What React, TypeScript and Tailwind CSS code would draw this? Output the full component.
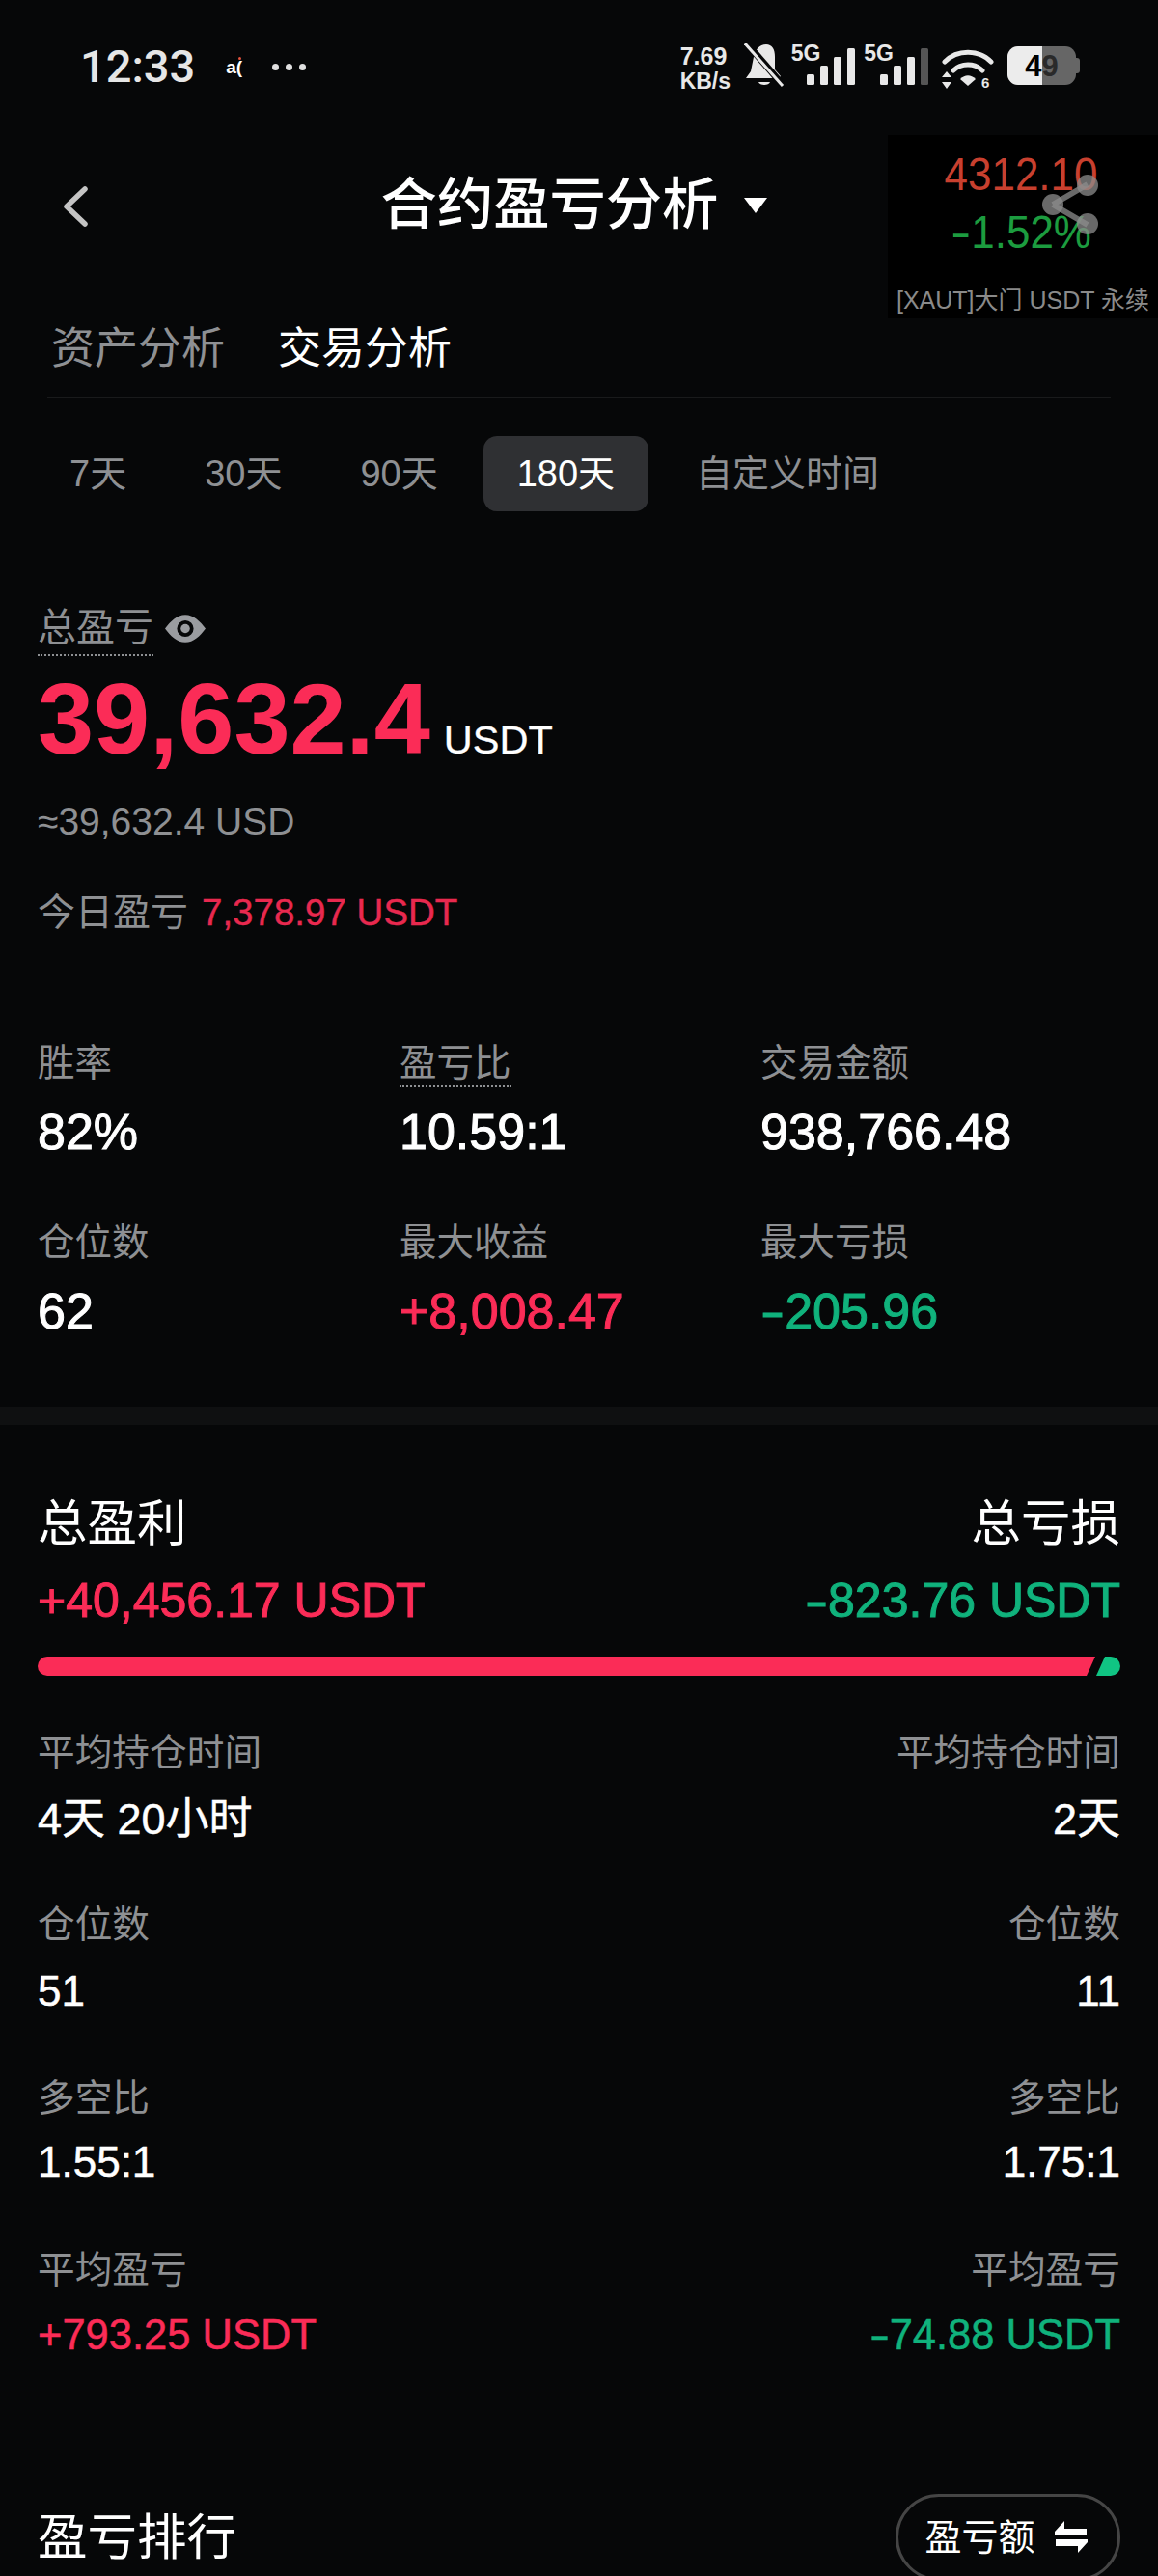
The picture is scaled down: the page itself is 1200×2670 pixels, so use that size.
import React from 'react';

const SANS = "font-['Liberation_Sans','Noto_Sans_CJK_SC',sans-serif]";

const periods = ['7天', '30天', '90天', '180天', '自定义时间'];

const stats = [
  { label: '胜率', value: '82%' },
  { label: '盈亏比', value: '10.59:1', dotted: true },
  { label: '交易金额', value: '938,766.48' },
  { label: '仓位数', value: '62' },
  { label: '最大收益', value: '+8,008.47', color: 'text-[#fb2c57]' },
  { label: '最大亏损', value: '-205.96', color: 'text-[#10b27c]' },
];

const rows = [
  { label: '平均持仓时间', left: '4天 20小时', right: '2天', h: 'h-[178px]', size: 'text-[45px] mt-[19px]' },
  { label: '仓位数', left: '51', right: '11', h: 'h-[180px]', size: 'text-[44px] mt-[19px]' },
  { label: '多空比', left: '1.55:1', right: '1.75:1', h: 'h-[178px]', size: 'text-[44px] mt-[16px]' },
];

// the reference font has a wider hyphen than Liberation Sans
const Minus = ({ children }: { children: string }) => (
  <span>
    <span className="mr-[0.15em] inline-block origin-left scale-x-[1.45]">-</span>
    {children}
  </span>
);

const Signal = ({ dimLast }: { dimLast?: boolean }) => (
  <div className="flex items-start">
    <span className="text-[23px] leading-[20px] font-bold text-[#e8e8e8]">5G</span>
    <svg width="50" height="38" viewBox="0 0 50 38" className="mt-[5px] -ml-[14px]">
      <rect x="0" y="27" width="8" height="11" rx="1.5" fill="#e8e8e8" />
      <rect x="14" y="18" width="8" height="20" rx="1.5" fill="#e8e8e8" />
      <rect x="28" y="9" width="8" height="29" rx="1.5" fill="#e8e8e8" />
      <rect x="42" y="0" width="8" height="38" rx="1.5" fill={dimLast ? '#555' : '#e8e8e8'} />
    </svg>
  </div>
);

const StatusBar = () => (
  <div className="flex h-[140px] items-start justify-between pl-[83px] pr-[81px] pt-[45px]">
    <div className="flex items-center">
      <span className="text-[47px] leading-[48px] font-medium text-[#e6e6e6] font-['Roboto',sans-serif]">12:33</span>
      <div className="relative ml-[32px] flex h-[20px] w-[20px] items-center text-[19px] leading-none font-bold text-white">
        <span>a(</span>
        <span className="absolute right-[4px] top-0 h-[3px] w-[3px] rounded-full bg-[#e5533d]" />
      </div>
      <div className="ml-[28px] flex gap-[7px]">
        <span className="h-[7px] w-[7px] rounded-full bg-[#e0e0e0]" />
        <span className="h-[7px] w-[7px] rounded-full bg-[#e0e0e0]" />
        <span className="h-[7px] w-[7px] rounded-full bg-[#e0e0e0]" />
      </div>
    </div>
    <div className="flex items-start">
      <div className="w-[54px] font-bold leading-[26px] text-[#e8e8e8]">
        <div className="text-[25px]">7.69</div>
        <div className="text-[23px]">KB/s</div>
      </div>
      <svg width="42" height="46" viewBox="0 0 42 46" className="ml-[12px]">
        <path d="M10 14 C11 7 16 1 23 1 C29 1 32 6 32 14 L32 27 L38 34 L36 36 L2 36 L7 29 Z" fill="#e8e8e8" />
        <path d="M15 40 H27 C26 44 16 44 15 40 Z" fill="#e8e8e8" />
        <path d="M2 -1 L41 44" stroke="#060708" strokeWidth="7" />
        <path d="M1 0 L40 44" stroke="#e8e8e8" strokeWidth="3" />
      </svg>
      <div className="ml-[7px]"><Signal /></div>
      <div className="ml-[9px]"><Signal dimLast /></div>
      <svg width="54" height="42" viewBox="0 0 54 42" className="ml-[14px] mt-[5px]">
        <path d="M3 14 C16 1 38 1 51 14" fill="none" stroke="#e8e8e8" strokeWidth="5" strokeLinecap="round" />
        <path d="M12 23 C20 15 34 15 42 23" fill="none" stroke="#e8e8e8" strokeWidth="5" strokeLinecap="round" />
        <path d="M19 32 C24 27 30 27 35 32 L27 39 Z" fill="#e8e8e8" />
        <path d="M5 24 L10 30 H0 Z M5 42 L0 35 H10 Z" fill="#e8e8e8" />
        <text x="41" y="41" fontSize="15" fontWeight="700" fill="#e8e8e8">6</text>
      </svg>
      <div className="ml-[14px] mt-[3px] flex items-center">
        <div className="relative flex h-[40px] w-[71px] items-center justify-center overflow-hidden rounded-[11px] bg-[#666666]">
          <div className="absolute inset-y-0 left-0 w-[36px] bg-[#ececec]" />
          <span className="relative text-[31px] font-bold leading-none text-black">4<span className="text-[#2a2a2a]">9</span></span>
        </div>
        <div className="h-[16px] w-[4px] rounded-r-[3px] bg-[#666666]" />
      </div>
    </div>
  </div>
);

const PriceWidget = () => (
  <div className="absolute right-0 top-[140px] flex h-[190px] w-[280px] flex-col items-center bg-black">
    <div className="mt-[15px] ml-[-4px] scale-y-[1.1] text-[44px] leading-[52px] text-[#c8402f]">4312.10</div>
    <div className="mt-[8px] ml-[-4px] scale-y-[1.1] text-[44px] leading-[52px] text-[#1c9c3f]">
      <Minus>1.52%</Minus>
    </div>
    <div className="mt-[29px] whitespace-nowrap text-[25px] leading-[30px] text-[#8a8a8a]">[XAUT]大门 USDT 永续</div>
    <svg width="60" height="62" viewBox="0 0 60 62" className="absolute left-[159px] top-[41px]">
      <path d="M12 31 L48 10 M12 31 L48 52" stroke="#8c8c8c" strokeOpacity="0.75" strokeWidth="6" />
      <circle cx="12" cy="31" r="11" fill="#8c8c8c" fillOpacity="0.75" />
      <circle cx="48" cy="11" r="11" fill="#8c8c8c" fillOpacity="0.75" />
      <circle cx="48" cy="51" r="11" fill="#8c8c8c" fillOpacity="0.75" />
    </svg>
  </div>
);

const Header = () => (
  <div className="relative flex h-[144px] items-center justify-center">
    <svg width="26" height="42" viewBox="0 0 26 42" className="absolute left-[65px] top-[53px]">
      <path d="M23 3 L4 21 L23 39" fill="none" stroke="#c4c4c4" strokeWidth="5.5" strokeLinecap="round" strokeLinejoin="round" />
    </svg>
    <h1 className="ml-[-9px] text-[58.3px] leading-[70px] font-medium text-white">合约盈亏分析</h1>
    <svg width="26" height="17" viewBox="0 0 26 17" className="ml-[26px]">
      <path d="M1 1 H25 L13 17 Z" fill="white" />
    </svg>
  </div>
);

const Tabs = () => (
  <div className="mx-[49px] mt-[46px] flex gap-[55px] border-b-2 border-[#191a1b] pb-[17px] pl-[4px] text-[45px] leading-[64px]">
    <span className="text-[#8e9093]">资产分析</span>
    <span className="text-white">交易分析</span>
  </div>
);

const PeriodBar = () => (
  <div className="mt-[39px] flex gap-[9px] pl-[36px] text-[38px]">
    {periods.map(p => (
      <div
        key={p}
        className={`flex h-[78px] items-center rounded-[14px] ${
          p === '180天' ? 'ml-[2px] mr-[4px] bg-[#2f3033] px-[35px] text-white' : 'px-[36px] text-[#8e9093]'
        }`}
      >
        {p}
      </div>
    ))}
  </div>
);

const Summary = () => (
  <div className="mt-[91px] px-[39px]">
    <div className="flex h-[60px] items-center">
      <span className="border-b-2 border-dotted border-[#8e9093] text-[40px] leading-[56px] text-[#8e9093]">总盈亏</span>
      <svg width="42" height="31" viewBox="0 0 44 32" className="ml-[12px]">
        <path fillRule="evenodd" fill="#9a9ca0" d="M22 1 C31 1 38 8 44 16 C38 24 31 31 22 31 C13 31 6 24 0 16 C6 8 13 1 22 1 Z M22 7 A9 9 0 1 0 22 25 A9 9 0 1 0 22 7 Z" />
        <circle cx="22" cy="16" r="5" fill="#9a9ca0" />
      </svg>
    </div>
    <div className="mt-[4px] flex items-baseline">
      <span className="text-[104.5px] leading-[120px] font-bold text-[#fb2c57]">39,632.4</span>
      <span className="ml-[14px] text-[41.5px] leading-none text-white [-webkit-text-stroke:0.3px]">USDT</span>
    </div>
    <div className="mt-[22px] text-[39px] leading-[50px] text-[#8e9093]">≈39,632.4 USD</div>
    <div className="mt-[44px] flex items-center text-[39px] leading-[50px]">
      <span className="text-[#8e9093]">今日盈亏</span>
      <span className="ml-[14px] text-[38.5px] text-[#e8294f] [-webkit-text-stroke:0.4px]">7,378.97 USDT</span>
    </div>
  </div>
);

const StatsGrid = () => (
  <div className="mt-[106px] grid grid-cols-[375px_374px_1fr] gap-y-[60px] pl-[39px]">
    {stats.map(s => (
      <div key={s.label}>
        <div className="text-[38.5px] leading-[50px] text-[#8e9093]">
          <span className={s.dotted ? 'border-b-2 border-dotted border-[#8e9093] inline-block leading-[46px]' : ''}>{s.label}</span>
        </div>
        <div className={`mt-[16px] text-[52px] leading-[60px] [-webkit-text-stroke:1px] ${s.color || 'text-white'}`}>
          {s.value.startsWith('-') ? <Minus>{s.value.slice(1)}</Minus> : s.value}
        </div>
      </div>
    ))}
  </div>
);

const ProfitLoss = () => (
  <div className="px-[39px]">
    <div className="flex justify-between pt-[72px] text-[51.5px] leading-[60px] text-white">
      <span>总盈利</span>
      <span>总亏损</span>
    </div>
    <div className="mt-[20px] flex justify-between text-[50px] leading-[60px] [-webkit-text-stroke:1px]">
      <span className="text-[#fb2c57]">+40,456.17 USDT</span>
      <span className="text-[#10b27c]"><Minus>823.76 USDT</Minus></span>
    </div>
    <div className="mt-[28px] flex h-[20px] gap-[1px]">
      <div className="flex-1 rounded-l-full bg-[#fb2c57] [clip-path:polygon(0_0,100%_0,calc(100%-9px)_100%,0_100%)]" />
      <div className="w-[25px] rounded-r-full bg-[#10c483] [clip-path:polygon(9px_0,100%_0,100%_100%,0_100%)]" />
    </div>
  </div>
);

const Details = () => (
  <div className="mt-[55px] px-[39px]">
    {rows.map(r => (
      <div key={r.label} className={r.h}>
        <div className="flex justify-between text-[38.7px] leading-[50px] text-[#8e9093]">
          <span>{r.label}</span>
          <span>{r.label}</span>
        </div>
        <div className={`flex justify-between leading-[50px] text-white [-webkit-text-stroke:0.5px] ${r.size}`}>
          <span>{r.left}</span>
          <span>{r.right}</span>
        </div>
      </div>
    ))}
    <div className="flex justify-between text-[38.7px] leading-[50px] text-[#8e9093]">
      <span>平均盈亏</span>
      <span>平均盈亏</span>
    </div>
    <div className="mt-[17px] flex justify-between text-[43.5px] leading-[50px] [-webkit-text-stroke:0.5px]">
      <span className="text-[#fb2c57]">+793.25 USDT</span>
      <span className="text-[#10b27c]"><Minus>74.88 USDT</Minus></span>
    </div>
  </div>
);

const Ranking = () => (
  <div className="mt-[140px] flex items-center justify-between pl-[39px] pr-[39px]">
    <span className="text-[51.5px] leading-[60px] text-white">盈亏排行</span>
    <div className="flex h-[90px] w-[233px] items-center justify-center gap-[20px] rounded-full border-[3px] border-[#454545] pr-[4px] text-[38px] text-white">
      盈亏额
      <svg width="34" height="34" viewBox="0 0 34 34">
        <path d="M0 11 L10 0 V8 H33 V15 H0 Z M34 22 L24 33 V26 H1 V19 H34 Z" fill="white" />
      </svg>
    </div>
  </div>
);

export default function App() {
  return (
    <div className={`relative h-[2670px] w-[1200px] overflow-hidden bg-[#060708] ${SANS}`}>
      <StatusBar />
      <PriceWidget />
      <Header />
      <Tabs />
      <PeriodBar />
      <Summary />
      <StatsGrid />
      <div className="mt-[69px] h-[19px] bg-[#0f1011]" />
      <ProfitLoss />
      <Details />
      <Ranking />
    </div>
  );
}
